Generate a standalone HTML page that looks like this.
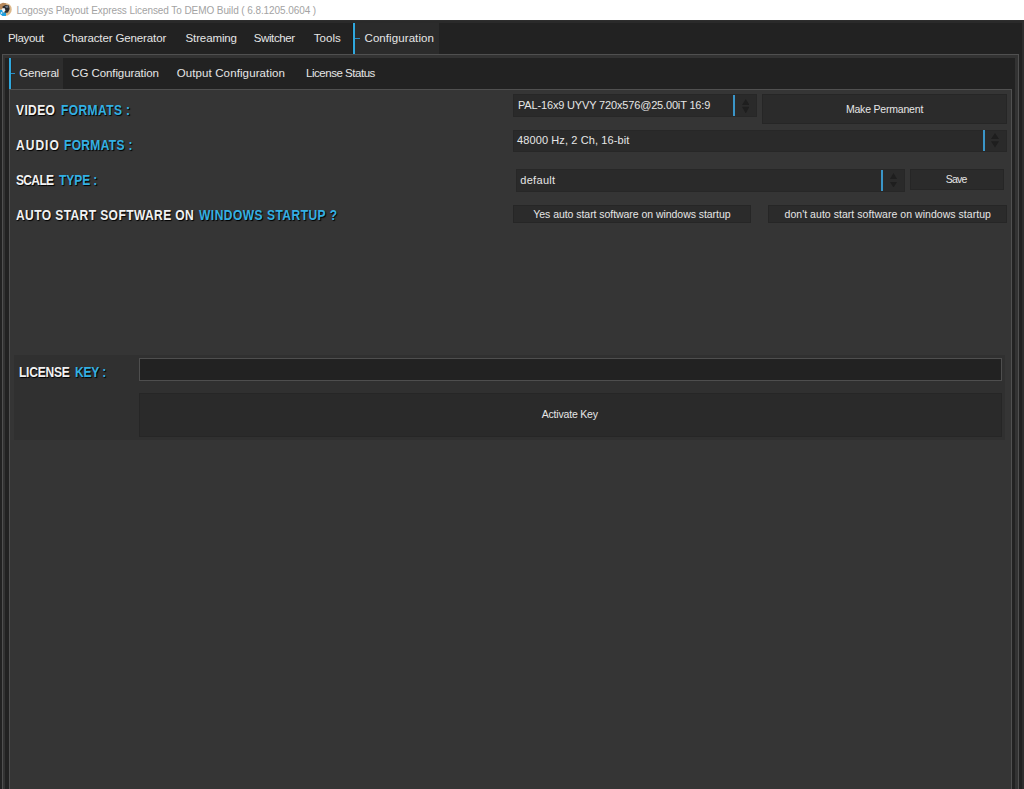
<!DOCTYPE html>
<html><head><meta charset="utf-8">
<style>
html,body{margin:0;padding:0;}
body{width:1024px;height:789px;overflow:hidden;position:relative;background:#222;font-family:"Liberation Sans",sans-serif;}
.b{position:absolute;box-sizing:border-box;}
.t{position:absolute;white-space:pre;}
.combo{background:#2a2a2a;border:1px solid #272727;}
.btn{background:#2b2b2b;border:1px solid #262626;}
.arr{position:absolute;width:0;height:0;border-left:4px solid transparent;border-right:4px solid transparent;}
.up{border-bottom:6px solid #1e1e1e;}
.dn{border-top:6px solid #1e1e1e;}
.bl{position:absolute;width:2px;background:#3a95c8;}
.ar{position:absolute;}
</style></head>
<body>
<!-- title bar -->
<div class="b" style="left:0;top:0;width:1024px;height:20px;background:#fff;"></div>
<svg style="position:absolute;left:0;top:0" width="13" height="18" viewBox="0 0 13 18">
  <circle cx="5.3" cy="9.4" r="6.4" fill="#dcb88a"/>
  <path d="M0 4 L3 2.8 L6 3.3 L5 7 L2 9 L0 9 Z" fill="#b5875a"/>
  <path d="M2.5 6.5 L6 4.8 L9 5.5 L9.6 9 L8 12.5 L5 13 L3 11 Z" fill="#2c2c2e"/>
  <path d="M5 6 L8 5.6 L8.5 7.5 L6 8 Z" fill="#6f7a88"/>
  <path d="M2 8.5 L4.5 8 L5.5 10.5 L4 12.2 L1.5 11.5 Z" fill="#eef3f6"/>
  <path d="M0 9.8 L2 10 L3 12.5 L6 12.8 L6 16 L2.5 16 L0 14 Z" fill="#1f9fe0"/>
  <path d="M1 12 L2.5 12.5 L2 14 L0.5 13.5 Z" fill="#dfe9f0"/>
</svg>
<!-- menu bar -->
<div class="b" style="left:0;top:20px;width:1024px;height:34px;background:#222;border-top:1px solid #2e2e2e;"></div>
<div class="b" style="left:0;top:21px;width:1024px;height:2px;background:#2a2a2a;"></div>
<div class="b" style="left:1022px;top:20px;width:2px;height:769px;background:#2e2e2e;"></div>
<div class="b" style="left:355px;top:23px;width:84px;height:31px;background:#2b2b2b;"></div>
<div class="b" style="left:352px;top:23px;width:1px;height:31px;background:#1c1c1c;"></div>
<div class="b" style="left:353px;top:23px;width:2px;height:31px;background:#2fa8de;"></div>
<div class="b" style="left:355px;top:38px;width:5px;height:1px;background:#2a8cc4;"></div>
<!-- outer panel -->
<div class="b" style="left:2px;top:54px;width:1017px;height:760px;background:#333;border:1px solid #505050;"></div>
<div class="b" style="left:5px;top:58px;width:1010px;height:760px;background:#222;"></div>
<!-- selected tab -->
<div class="b" style="left:11px;top:58px;width:52px;height:31px;background:#2d2d2d;"></div>
<div class="b" style="left:11px;top:58px;width:1px;height:31px;background:#272727;"></div>
<div class="b" style="left:9px;top:58px;width:2px;height:31px;background:#2fa8de;"></div>
<div class="b" style="left:11px;top:73px;width:4px;height:1px;background:#2a8cc4;"></div>
<!-- content -->
<div class="b" style="left:9px;top:89px;width:1003px;height:760px;background:#353535;border:1px solid #505050;"></div>
<!-- video combo -->
<div class="b combo" style="left:513px;top:94px;width:244px;height:23px;"></div>
<div class="bl" style="left:733px;top:95px;height:21px;"></div>
<svg class="ar" style="left:741.9px;top:98.6px" width="7.5" height="14.5" viewBox="0 0 7.5 14.5"><polygon points="0,6 3.75,0 7.5,6" fill="#1e1e1e"/><polygon points="0,7.7 7.5,7.7 3.75,14.5" fill="#1e1e1e"/></svg>
<div class="b btn" style="left:762px;top:94px;width:245px;height:30px;"></div>
<!-- audio combo -->
<div class="b combo" style="left:513px;top:130px;width:494px;height:22px;"></div>
<div class="bl" style="left:983px;top:130px;height:21px;"></div>
<svg class="ar" style="left:991.1px;top:133.4px" width="8" height="14.5" viewBox="0 0 8 14.5"><polygon points="0,6 4.0,0 8,6" fill="#1e1e1e"/><polygon points="0,8.3 8,8.3 4.0,14.5" fill="#1e1e1e"/></svg>
<!-- scale combo -->
<div class="b combo" style="left:516px;top:169px;width:389px;height:23px;"></div>
<div class="bl" style="left:881px;top:170px;height:21px;"></div>
<svg class="ar" style="left:890.0px;top:172.8px" width="7" height="14.5" viewBox="0 0 7 14.5"><polygon points="0,5.9 3.5,0 7,5.9" fill="#1e1e1e"/><polygon points="0,8.9 7,8.9 3.5,14.5" fill="#1e1e1e"/></svg>
<div class="b btn" style="left:910px;top:169px;width:94px;height:21px;"></div>
<!-- auto start buttons -->
<div class="b btn" style="left:513px;top:205px;width:238px;height:18px;"></div>
<div class="b btn" style="left:768px;top:205px;width:239px;height:18px;"></div>
<!-- license panel -->
<div class="b" style="left:14px;top:355px;width:991px;height:85px;background:#303030;"></div>
<div class="b" style="left:139px;top:358px;width:863px;height:23px;background:#222;border:1px solid #4e4e4e;"></div>
<div class="b btn" style="left:139px;top:393px;width:863px;height:44px;background:#2a2a2a;"></div>
<div class="t" style="left:16.40px;top:6px;font-size:10px;line-height:10px;font-weight:normal;color:#a3a3a3;letter-spacing:-0.083px;">Logosys Playout Express Licensed To DEMO Build ( 6.8.1205.0604 )</div>
<div class="t" style="left:8.00px;top:33px;font-size:11.5px;line-height:11.5px;font-weight:normal;color:#e6e6e6;letter-spacing:-0.360px;">Playout</div>
<div class="t" style="left:63.00px;top:33px;font-size:11.5px;line-height:11.5px;font-weight:normal;color:#e6e6e6;letter-spacing:-0.124px;">Character Generator</div>
<div class="t" style="left:185.50px;top:33px;font-size:11.5px;line-height:11.5px;font-weight:normal;color:#e6e6e6;letter-spacing:-0.115px;">Streaming</div>
<div class="t" style="left:253.80px;top:33px;font-size:11.5px;line-height:11.5px;font-weight:normal;color:#e6e6e6;letter-spacing:-0.410px;">Switcher</div>
<div class="t" style="left:313.80px;top:33px;font-size:11.5px;line-height:11.5px;font-weight:normal;color:#e6e6e6;letter-spacing:0.051px;">Tools</div>
<div class="t" style="left:364.50px;top:33px;font-size:11.5px;line-height:11.5px;font-weight:normal;color:#e6e6e6;letter-spacing:0.083px;">Configuration</div>
<div class="t" style="left:19.30px;top:68px;font-size:11.5px;line-height:11.5px;font-weight:normal;color:#e6e6e6;letter-spacing:-0.176px;">General</div>
<div class="t" style="left:71.20px;top:68px;font-size:11.5px;line-height:11.5px;font-weight:normal;color:#e6e6e6;letter-spacing:-0.077px;">CG Configuration</div>
<div class="t" style="left:176.70px;top:68px;font-size:11.5px;line-height:11.5px;font-weight:normal;color:#e6e6e6;letter-spacing:0.114px;">Output Configuration</div>
<div class="t" style="left:306.00px;top:68px;font-size:11.5px;line-height:11.5px;font-weight:normal;color:#e6e6e6;letter-spacing:-0.468px;">License Status</div>
<div class="t" style="left:16.10px;top:103px;font-size:14px;line-height:14px;font-weight:bold;color:#f2f2f2;letter-spacing:0.418px;transform:scaleX(0.86);transform-origin:0 0;text-shadow:1px 1px 1px #000;">VIDEO</div>
<div class="t" style="left:60.80px;top:103px;font-size:14px;line-height:14px;font-weight:bold;color:#33b0e3;letter-spacing:0.448px;transform:scaleX(0.86);transform-origin:0 0;text-shadow:1px 1px 1px #000;">FORMATS :</div>
<div class="t" style="left:16.00px;top:138px;font-size:14px;line-height:14px;font-weight:bold;color:#f2f2f2;letter-spacing:1.166px;transform:scaleX(0.86);transform-origin:0 0;text-shadow:1px 1px 1px #000;">AUDIO</div>
<div class="t" style="left:64.00px;top:138px;font-size:14px;line-height:14px;font-weight:bold;color:#33b0e3;letter-spacing:0.361px;transform:scaleX(0.86);transform-origin:0 0;text-shadow:1px 1px 1px #000;">FORMATS :</div>
<div class="t" style="left:16.00px;top:173px;font-size:14px;line-height:14px;font-weight:bold;color:#f2f2f2;letter-spacing:-0.789px;transform:scaleX(0.86);transform-origin:0 0;text-shadow:1px 1px 1px #000;">SCALE</div>
<div class="t" style="left:59.20px;top:173px;font-size:14px;line-height:14px;font-weight:bold;color:#33b0e3;letter-spacing:-0.100px;transform:scaleX(0.86);transform-origin:0 0;text-shadow:1px 1px 1px #000;">TYPE :</div>
<div class="t" style="left:16.00px;top:208px;font-size:14px;line-height:14px;font-weight:bold;color:#f2f2f2;letter-spacing:0.462px;transform:scaleX(0.86);transform-origin:0 0;text-shadow:1px 1px 1px #000;">AUTO START SOFTWARE ON</div>
<div class="t" style="left:199.40px;top:208px;font-size:14px;line-height:14px;font-weight:bold;color:#33b0e3;letter-spacing:0.539px;transform:scaleX(0.86);transform-origin:0 0;text-shadow:1px 1px 1px #000;">WINDOWS STARTUP ?</div>
<div class="t" style="left:18.70px;top:365px;font-size:14px;line-height:14px;font-weight:bold;color:#f2f2f2;letter-spacing:-0.289px;transform:scaleX(0.86);transform-origin:0 0;text-shadow:1px 1px 1px #000;">LICENSE</div>
<div class="t" style="left:74.60px;top:365px;font-size:14px;line-height:14px;font-weight:bold;color:#33b0e3;letter-spacing:-0.215px;transform:scaleX(0.86);transform-origin:0 0;text-shadow:1px 1px 1px #000;">KEY :</div>
<div class="t" style="left:518.00px;top:100px;font-size:11px;line-height:11px;font-weight:normal;color:#e6e6e6;letter-spacing:-0.163px;">PAL-16x9 UYVY 720x576@25.00iT 16:9</div>
<div class="t" style="left:517.00px;top:135px;font-size:11px;line-height:11px;font-weight:normal;color:#e6e6e6;letter-spacing:0.109px;">48000 Hz, 2 Ch, 16-bit</div>
<div class="t" style="left:520.20px;top:175px;font-size:11px;line-height:11px;font-weight:normal;color:#e6e6e6;letter-spacing:0.322px;">default</div>
<div class="t" style="left:845.90px;top:104px;font-size:10.5px;line-height:10.5px;font-weight:normal;color:#e6e6e6;letter-spacing:-0.195px;">Make Permanent</div>
<div class="t" style="left:945.80px;top:174px;font-size:10.5px;line-height:10.5px;font-weight:normal;color:#e6e6e6;letter-spacing:-0.831px;">Save</div>
<div class="t" style="left:533.30px;top:209px;font-size:10.5px;line-height:10.5px;font-weight:normal;color:#e6e6e6;letter-spacing:-0.048px;">Yes auto start software on windows startup</div>
<div class="t" style="left:784.50px;top:209px;font-size:10.5px;line-height:10.5px;font-weight:normal;color:#e6e6e6;letter-spacing:0.044px;">don't auto start software on windows startup</div>
<div class="t" style="left:541.70px;top:409px;font-size:10.5px;line-height:10.5px;font-weight:normal;color:#e6e6e6;letter-spacing:-0.187px;">Activate Key</div>
</body></html>
